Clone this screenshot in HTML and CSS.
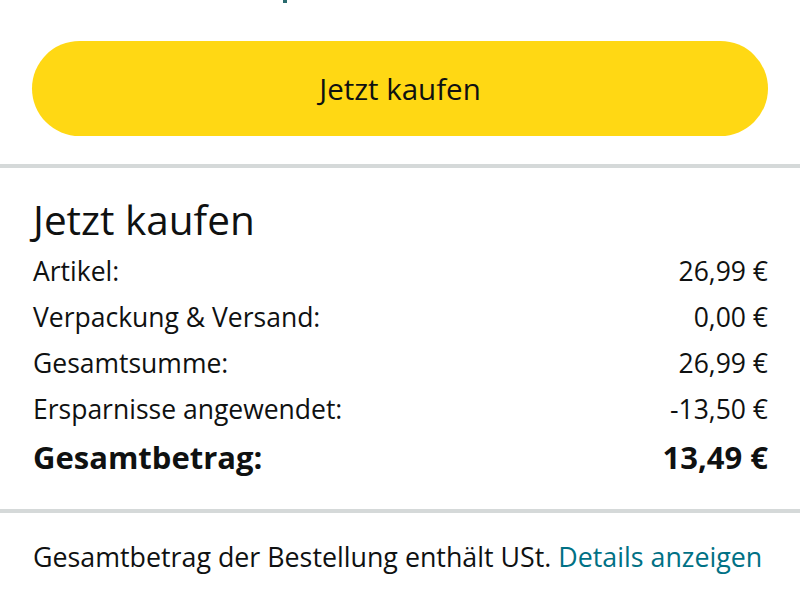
FILE: index.html
```html
<!DOCTYPE html>
<html lang="de">
<head>
<meta charset="utf-8">
<link rel="stylesheet" href="styles.css">
</head>
<body>
<div class="fragment"><span class="fragment-mark"></span></div>
<div class="btn-wrap">
  <div class="buy-btn">Jetzt kaufen</div>
</div>
<div class="sep"></div>
<section class="summary">
  <h1 class="title">Jetzt kaufen</h1>
  <div class="row"><span>Artikel:</span><span>26,99 €</span></div>
  <div class="row"><span>Verpackung &amp; Versand:</span><span>0,00 €</span></div>
  <div class="row"><span>Gesamtsumme:</span><span>26,99 €</span></div>
  <div class="row"><span>Ersparnisse angewendet:</span><span>-13,50 €</span></div>
  <div class="row total"><span>Gesamtbetrag:</span><span>13,49 €</span></div>
</section>
<div class="sep"></div>
<p class="footer">Gesamtbetrag der Bestellung enthält USt. <a class="link">Details anzeigen</a></p>
</body>
</html>
```
FILE: styles.css
```css
html, body {
  margin: 0;
  padding: 0;
  background: #ffffff;
}
body {
  font-family: "Open Sans", "Noto Sans", "Liberation Sans", sans-serif;
  color: #0F1111;
  width: 800px;
  overflow: hidden;
}
.fragment {
  height: 3px;
  padding-left: 283px;
}
.fragment-mark {
  display: block;
  width: 4px;
  height: 3px;
  background: #2a6b6e;
}
.btn-wrap {
  padding: 38px 32px 28px;
}
.buy-btn {
  height: 95px;
  border-radius: 48px;
  background: #FFD814;
  display: flex;
  align-items: center;
  justify-content: center;
  font-size: 29.5px;
  color: #0F1111;
}
.sep {
  height: 4px;
  background: #D5D9D9;
}
.summary {
  padding: 28px 32px 27px 33px;
}
.title {
  margin: 0 0 4px;
  font-size: 40.5px;
  font-weight: 400;
  line-height: 48px;
}
.row {
  display: flex;
  justify-content: space-between;
  font-size: 26.5px;
  line-height: 46px;
}
.row.total {
  font-weight: 700;
  font-size: 31px;
  line-height: 50px;
}
.footer {
  margin: 0;
  padding: 27px 33px 25px;
  font-size: 26.8px;
  line-height: 34px;
  white-space: nowrap;
}
.link {
  color: #007185;
}
```
